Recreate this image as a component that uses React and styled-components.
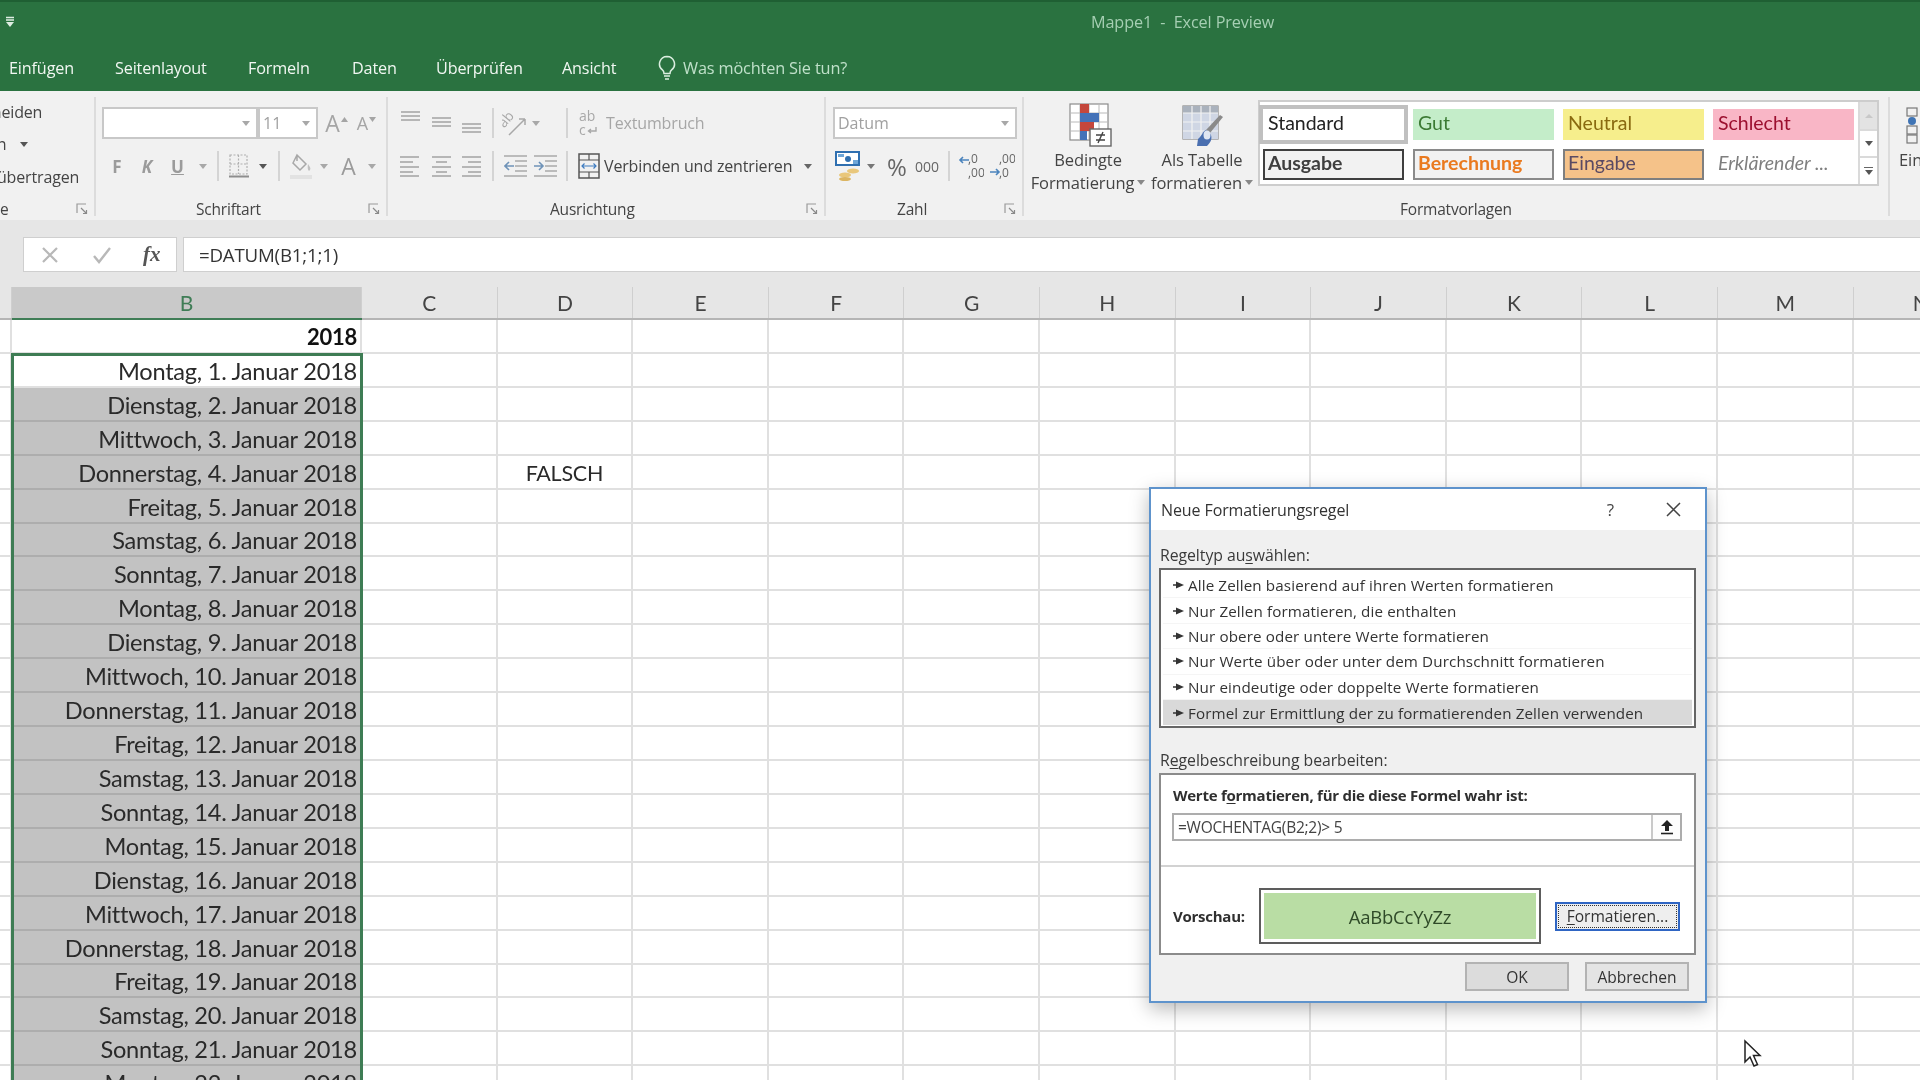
import React from "react";
import styled, { createGlobalStyle } from "styled-components";

const UI = `"Open Sans", "Noto Sans", "Liberation Sans", sans-serif`;
const CELL = `Lato, "Open Sans", sans-serif`;

const Global = createGlobalStyle`
  html, body { margin: 0; padding: 0; background: #fff; }
  body { font-family: ${UI}; }
  * { box-sizing: border-box; }
`;

const Page = styled.div`
  width: 1920px; height: 1080px; overflow: hidden; position: relative; background: #fff;
  filter: blur(0.45px);
`;
const TitleBar = styled.header`
  height: 91px; background: #2a7240; border-top: 2px solid #1f5f33; display: flex; flex-direction: column; color: #fff;
`;
const TitleRow = styled.div`
  height: 42px; display: flex; align-items: center; position: relative; padding: 0 0 2px 6px;
`;
const WindowTitle = styled.div`
  margin-left: 1077px; font-size: 16.2px; color: #a6cfb3; white-space: nowrap; letter-spacing: -0.1px;
`;
const TabRow = styled.nav`
  height: 47px; display: flex; align-items: center; padding: 1px 0 0 9px;
`;
const Tab = styled.span`
  font-size: 16.2px; color: #f1f7f2; width: ${p => p.$w}px; flex: none; letter-spacing: -0.15px;
`;
const Tell = styled.span`
  display: flex; align-items: center; gap: 7px; font-size: 16.3px; color: #bfe0c9; letter-spacing: -0.15px; margin-left: -9px;
`;

const Ribbon = styled.section`
  height: 129px; background: #f1f1f1; display: flex; width: 2100px;
`;
const Group = styled.div`
  width: ${p => p.$w}px; flex: none; height: 119px; margin-top: 6px; border-right: 2px solid #dcdcdc;
  padding-top: 8px; position: relative; display: flex; flex-direction: column;
  padding-left: ${p => p.$pl || 0}px;
`;
const GroupLabel = styled.div`
  position: absolute; left: ${p => p.$x}px; top: 102px; font-size: 15.5px; line-height: 20px; color: #444; white-space: nowrap; letter-spacing: -0.2px;
`;
const Launcher = styled.span`
  position: absolute; right: 6px; top: 101px; width: 12px; height: 12px; display: block;
`;
const ToolRow = styled.div`
  height: 36px; display: flex; align-items: center; flex: none; margin-bottom: 7px;
`;
const Slot = styled.span`
  width: ${p => p.$w}px; height: 30px; flex: none; display: flex; align-items: center; justify-content: center;
  color: ${p => p.$c || "#9b9b9b"}; font-size: ${p => p.$fs || 16}px; font-weight: ${p => p.$b ? 700 : 400};
  font-family: ${UI};
`;
const Divider = styled.span`
  width: ${p => p.$w}px; height: 30px; flex: none; display: flex; justify-content: center;
  &::after { content: ""; width: 1.5px; height: 100%; background: #d4d4d4; }
`;
const Caret = styled.span`
  width: 0; height: 0; border-left: 4px solid transparent; border-right: 4px solid transparent;
  border-top: 5px solid ${p => p.$c || "#a8a8a8"}; display: inline-block; flex: none; margin-left: ${p => p.$ml || 0}px;
`;
const ComboBox = styled.div`
  width: ${p => p.$w}px; height: 32px; background: #fff; border: 2px solid #c8c8c8; display: flex; align-items: center;
  justify-content: space-between; padding: 0 6px 0 3px; flex: none; color: #a0a0a0; font-size: 16px; margin-left: ${p => p.$ml || 0}px;
`;
const ToolText = styled.span`
  font-size: ${p => p.$fs || 16}px; color: ${p => p.$c || "#444"}; white-space: nowrap; letter-spacing: -0.15px; flex: none;
  width: ${p => p.$w ? p.$w + "px" : "auto"}; margin-left: ${p => p.$ml || 0}px;
`;
const ClipWindow = styled.div`
  width: 92px; height: 100px; overflow: hidden; margin-top: -12px; flex: none;
`;
const ClipColumn = styled.div`
  margin-left: -60px; display: flex; flex-direction: column; padding-top: 2px;
`;
const ClipLine = styled.div`
  height: ${p => p.$h}px; display: flex; align-items: center; gap: 14px; font-size: 16px; color: #444; white-space: nowrap; letter-spacing: -0.15px;
`;
const Large = styled.div`
  width: ${p => p.$w}px; flex: none; display: flex; flex-direction: column; align-items: ${p => p.$start ? "flex-start" : "center"}; color: #444; font-size: 16.5px; letter-spacing: -0.1px; line-height: 23px; white-space: nowrap;
`;
const LargeIcon = styled.div`
  height: 46px; display: flex; align-items: flex-start; margin: -2px 0 -1px ${p => p.$ml || 0}px;
`;
const LargeLine = styled.div`
  display: flex; align-items: center; gap: 3px;
`;
const Row = styled.div`display: flex;`;
const Gallery = styled.div`
  width: 621px; height: 86px; margin-left: 3px; margin-top: -5px; background: #fff; border: 2px solid #cdcdcd; display: flex; flex: none;
`;
const StyleGrid = styled.div`
  width: 600px; padding: 7px 0 0 3px; display: grid; grid-template-columns: repeat(4, 141px); column-gap: 9px; grid-template-rows: 31px 31px; row-gap: 9px;
`;
const StyleCell = styled.div`
  font-family: ${CELL}; font-size: 19.5px; display: flex; align-items: center; padding: 0 0 5px ${p => p.$bd ? 3 : 5}px; white-space: nowrap;
  background: ${p => p.$bg || "#fff"}; color: ${p => p.$c || "#222"};
  border: ${p => p.$bd || "none"}; font-weight: ${p => p.$b ? 700 : 400}; font-style: ${p => p.$i ? "italic" : "normal"};
  ${p => p.$active && "box-shadow: 0 0 0 4px #c0c0c0;"}
`;
const GalleryScroll = styled.div`
  width: 19px; margin-left: auto; border-left: 2px solid #dadada; display: grid; grid-template-rows: 29px 27px 1fr; background: #f3f3f3;
`;
const ScrollBtn = styled.div`
  display: flex; flex-direction: column; align-items: center; justify-content: center; gap: 2px; background: ${p => p.$bg || "#fff"}; border-bottom: 2px solid #dadada;
  &:last-child { border-bottom: 0; }
`;
const Dash = styled.span`width: 9px; height: 1.5px; background: #666;`;

const FormulaBand = styled.div`
  height: 67px; background: #e6e6e6; padding-top: 17px;
`;
const FormulaBar = styled.div`
  height: 35px; display: flex; padding-left: 23px; background: #e6e6e6;
`;
const FormulaBtns = styled.div`
  width: 154px; height: 100%; background: #fff; border: 1.5px solid #cfcfcf; display: flex; align-items: center; padding-left: 17px;
`;
const FormulaBtn = styled.span`
  width: 51px; flex: none; display: flex; justify-content: flex-start; color: ${p => p.$c}; font-family: "Liberation Serif", serif; font-style: italic; font-size: 21px; font-weight: 700;
`;
const FormulaInput = styled.div`
  flex: 1; margin-left: 6px; background: #fff; border-top: 1.5px solid #cfcfcf; border-bottom: 1.5px solid #cfcfcf; border-left: 1.5px solid #cfcfcf;
  font-size: 18.7px; color: #333; display: flex; align-items: center; padding-left: 15px; letter-spacing: -0.2px;
`;

const COLS = "12px 350px repeat(12, 135.6px)";
const Sheet = styled.section`position: relative; height: 793px; overflow: hidden;`;
const HeaderRow = styled.div`
  display: grid; grid-template-columns: ${COLS}; height: 33px; background: #e6e6e6; border-bottom: 2px solid #b5b5b5;
`;
const HeaderCell = styled.div`
  font-family: ${CELL}; font-size: 21px; display: flex; align-items: center; justify-content: center; color: ${p => p.$active ? "#3f7d56" : "#444"};
  background: ${p => p.$active ? "#c9c9c9" : "transparent"}; border-right: 1.5px solid #cfcfcf;
  ${p => p.$active && "box-shadow: 0 2px 0 #3f7d56;"}
`;
const SheetRow = styled.div`
  display: grid; grid-template-columns: ${COLS}; height: 33.93px;
`;
const Cell = styled.div`
  font-family: ${CELL}; font-size: ${p => p.$fs || 23.6}px; color: #2a2a2a; border-right: 2px solid #e0e0e0; border-bottom: 2px solid #e0e0e0;
  display: flex; align-items: center; justify-content: ${p => p.$center ? "center" : "flex-end"}; padding: 2px ${p => p.$center ? 0 : 3}px 0 0;
  white-space: nowrap; letter-spacing: -0.25px;
`;
const DateCell = styled(Cell)`
  background: ${p => p.$gray ? "#c2c2c2" : "#fff"}; border-bottom-color: ${p => p.$gray ? "#adadad" : "#e0e0e0"}; font-weight: ${p => p.$b ? 700 : 400};
  ${p => p.$b && "color: #111;"}
`;
const Selection = styled.div`
  position: absolute; left: 11px; top: 66px; width: 352px; height: 760px; border: 3px solid #3e7c54; pointer-events: none;
`;

const Dialog = styled.div`
  position: absolute; left: 1149px; top: 487px; width: 558px; height: 516px; background: #f0f0f0; border: 2px solid #5e93cc;
  box-shadow: 0 6px 18px rgba(0,0,0,.28); display: flex; flex-direction: column; font-family: ${UI}; color: #333; padding: 0 9px 0 8px;
`;
const DialogTitle = styled.div`
  height: 41px; margin: 0 -9px 0 -8px; background: #fff; display: flex; align-items: center; padding: 0 24px 0 10px; font-size: 16px; letter-spacing: -0.1px; color: #333; flex: none;
`;
const DialogActions = styled.div`margin-left: auto; display: flex; align-items: center; gap: 52px;`;
const HelpMark = styled.span`font-size: 17px; color: #444;`;
const FieldLabel = styled.div`
  font-size: 15.8px; height: 22px; line-height: 22px; margin-top: ${p => p.$mt}px; padding-left: 1px; flex: none; letter-spacing: -0.05px; color: #3a3a3a;
  u { text-underline-offset: 2px; }
`;
const RuleList = styled.div`
  height: 160px; margin-top: 2px; border: 2px solid #666; background: #fff; padding: 3px 2px 0; flex: none;
`;
const RuleRow = styled.div`
  height: 25.4px; display: flex; align-items: center; gap: 4px; padding-left: 10px; font-size: 15.2px; color: #333; white-space: nowrap;
  background: ${p => p.$on ? "#d9d9d9" : "#fff"}; border-bottom: ${p => p.$on ? "0" : "1.5px solid #f5f5f5"}; letter-spacing: .12px;
`;
const DescBox = styled.div`
  height: 182px; margin-top: 2px; border: 2px solid #8b8b8b; background: #fff; flex: none; display: flex; flex-direction: column;
`;
const BoldLabel = styled.div`
  font-size: 15px; font-weight: 700; color: #2f2f2f; margin: 10px 0 0 12px; height: 20px; line-height: 20px; letter-spacing: -0.25px;
  u { text-underline-offset: 2px; }
`;
const FormulaField = styled.div`
  margin: 8px 0 0 11px; width: 510px; height: 28px; border: 2px solid #adadad; display: flex; align-items: center; padding-left: 4px; font-size: 15.5px; color: #444; letter-spacing: -0.25px;
`;
const RefBtn = styled.div`
  margin-left: auto; width: 29px; height: 100%; background: #fdfdfd; border-left: 2px solid #c9c9c9; display: flex; align-items: center; justify-content: center;
`;
const HR = styled.div`height: 2px; background: #d2d2d2; margin-top: 24px; flex: none;`;
const PreviewRow = styled.div`
  margin: 21px 0 0 12px; display: flex; align-items: center; height: 56px;
`;
const PreviewLabel = styled.div`font-size: 15px; font-weight: 700; color: #2f2f2f; width: 86px; flex: none; letter-spacing: -0.25px;`;
const PreviewSwatch = styled.div`
  width: 282px; height: 56px; border: 2px solid #5d5d5d; padding: 3px; flex: none; background: #fff;
`;
const PreviewFill = styled.div`
  height: 100%; background: #b9dda4; display: flex; align-items: center; justify-content: center; font-size: 18.5px; color: #2f4a28; letter-spacing: -0.2px;
`;
const ButtonBase = styled.div`
  display: flex; align-items: center; justify-content: center; font-size: 15.6px; color: #333; letter-spacing: -0.05px; flex: none;
  u { text-underline-offset: 2px; }
`;
const PrimaryBtn = styled(ButtonBase)`
  width: 125px; height: 29px; margin-left: 14px; background: #eeeeee; border: 2.5px solid #2f65c3; outline: 1px dotted #333; outline-offset: -4px;
`;
const DialogButtons = styled.div`margin-top: 7px; display: flex; justify-content: flex-end; gap: 16px; padding-right: 7px; flex: none;`;
const PlainBtn = styled(ButtonBase)`
  width: 104px; height: 29px; background: ${p => p.$bg || "#e4e4e4"}; border: 2px solid #b3b3b3;
`;
const CursorMark = styled.div`
  position: absolute; left: 1743px; top: 1039px; width: 20px; height: 30px;
`;

const Svg = ({ w, h, children }) => <svg width={w} height={h} viewBox={`0 0 ${w} ${h}`} fill="none">{children}</svg>;

const Lines = ({ rows, color = "#a8a8a8" }) => (
  <Svg w={22} h={26}>
    {rows.map(([y, x0, x1], i) => <line key={i} x1={x0} x2={x1} y1={y} y2={y} stroke={color} strokeWidth="1.6" />)}
  </Svg>
);
const TOP = [[2, 2, 21], [6, 2, 21], [10, 2, 21]];
const MID = [[8, 2, 21], [12, 2, 21], [16, 2, 21]];
const BOT = [[14, 2, 21], [18, 2, 21], [22, 2, 21]];
const LEFT = [[4, 1, 20], [9, 1, 14], [14, 1, 20], [19, 1, 14], [23, 1, 20]];
const CENTER = [[4, 2, 21], [9, 6, 17], [14, 2, 21], [19, 6, 17], [23, 2, 21]];
const RIGHT = [[4, 2, 21], [9, 8, 21], [14, 2, 21], [19, 8, 21], [23, 2, 21]];

const Launch = () => (
  <Launcher>
    <Svg w={12} h={12}>
      <path d="M1 10V1h9" stroke="#9a9a9a" strokeWidth="1.2" />
      <path d="M5 5l5 5M7 10.5h3.5V7" stroke="#8a8a8a" strokeWidth="1.2" />
    </Svg>
  </Launcher>
);

const Orientation = () => (
  <Svg w={26} h={28}>
    <text x="0" y="15" transform="rotate(-50 6 15)" fontFamily={UI} fontSize="14" fill="#a8a8a8">ab</text>
    <path d="M7 26L23 10M23 10h-6M23 10v6" stroke="#a8a8a8" strokeWidth="1.5" />
  </Svg>
);
const WrapIcon = () => (
  <Svg w={22} h={28}>
    <text x="1" y="12" fontFamily={UI} fontSize="14" fill="#a8a8a8">ab</text>
    <text x="1" y="26" fontFamily={UI} fontSize="14" fill="#a8a8a8">c</text>
    <path d="M18 18v4h-7M13 20l-2.5 2 2.5 2" stroke="#a8a8a8" strokeWidth="1.4" />
  </Svg>
);
const MergeIcon = () => (
  <Svg w={22} h={26}>
    <rect x="1" y="1" width="20" height="24" stroke="#555" strokeWidth="1.5" />
    <path d="M1 7h20M1 19h20M11 1v6M11 19v6" stroke="#555" strokeWidth="1.2" />
    <path d="M4 13h14M6.5 10.5L4 13l2.5 2.5M15.5 10.5L18 13l-2.5 2.5" stroke="#3f7cc0" strokeWidth="1.2" />
  </Svg>
);
const IndentIcon = ({ out }) => (
  <Svg w={24} h={24}>
    {[2, 22].map(y => <line key={y} x1="0" x2="23" y1={y} y2={y} stroke="#a8a8a8" strokeWidth="1.5" />)}
    {[7, 12, 17].map(y => <line key={y} x1="11" x2="23" y1={y} y2={y} stroke="#a8a8a8" strokeWidth="1.5" />)}
    <path d={out ? "M10 12H1M5 8l-4 4 4 4" : "M0 12h9M5 8l4 4-4 4"} stroke="#6f93b8" strokeWidth="1.6" />
  </Svg>
);
const BorderIcon = () => (
  <Svg w={22} h={26}>
    <rect x="2" y="2" width="17" height="19" stroke="#b0b0b0" strokeWidth="1.2" strokeDasharray="2 1.5" />
    <path d="M10.5 2v19M2 11h17" stroke="#b0b0b0" strokeWidth="1.2" strokeDasharray="2 1.5" />
    <path d="M1 23.5h20" stroke="#8d8d8d" strokeWidth="2" />
  </Svg>
);
const FillIcon = () => (
  <Svg w={24} h={28}>
    <path d="M8 3l9 9-6 6-7-7zM8 3V9" stroke="#a8a8a8" strokeWidth="1.5" />
    <path d="M19 12c2 3 3 4 2 6s-3 0-2-6z" fill="#c0c0c0" />
    <rect x="1" y="23" width="22" height="4" fill="#e2e2e2" />
  </Svg>
);
const GrowA = ({ up, size = 22 }) => (
  <Slot $w={30} $fs={size} $c="#a5a5a5">
    A
    <Svg w={9} h={18}>
      <path d={up ? "M1 8l3.5-5L8 8z" : "M1 3l3.5 5L8 3z"} fill="#a5a5a5" />
    </Svg>
  </Slot>
);
const Currency = () => (
  <Svg w={26} h={30}>
    <rect x="1" y="1" width="23" height="13" fill="#fff" stroke="#2f6fb0" strokeWidth="2" />
    <path d="M3 3h6v3H3zM18 9h5v4h-5z" fill="#6ea6d8" />
    <circle cx="13" cy="8" r="3" fill="#2f6fb0" />
    <ellipse cx="18" cy="20" rx="6" ry="2.5" fill="#e9c77b" />
    <ellipse cx="10" cy="24" rx="6" ry="2.5" fill="#e9c77b" />
    <ellipse cx="10" cy="28" rx="6" ry="2" fill="#dcb562" />
  </Svg>
);
const DecIcon = ({ inc }) => (
  <Svg w={26} h={28}>
    <text x="10" y="11" fontFamily={UI} fontSize="12" fill="#666">{inc ? ",0" : ",00"}</text>
    <text x="10" y="25" fontFamily={UI} fontSize="12" fill="#666">{inc ? ",00" : ",0"}</text>
    <path d={inc ? "M11 8H2M5 5L2 8l3 3" : "M1 20h9M7 17l3 3-3 3"} stroke="#4b84bd" strokeWidth="1.6" />
  </Svg>
);
const CondIcon = () => (
  <Svg w={44} h={44}>
    <rect x="1" y="1" width="38" height="36" fill="#fff" stroke="#8b8b8b" strokeWidth="1.2" />
    <path d="M11 1v36M20 1v36M30 1v36M1 10h38M1 19h38M1 28h38" stroke="#b9b9b9" strokeWidth="1" />
    <rect x="11" y="1" width="9" height="9" fill="#c4473c" />
    <rect x="11" y="10" width="19" height="9" fill="#4472b8" />
    <rect x="11" y="19" width="14" height="9" fill="#c4473c" />
    <rect x="11" y="28" width="7" height="9" fill="#4472b8" />
    <rect x="21" y="26" width="21" height="17" fill="#fff" stroke="#666" strokeWidth="1.4" />
    <path d="M27 32h9M27 37h9M34 29l-5 11" stroke="#444" strokeWidth="1.4" />
  </Svg>
);
const TableIcon = () => (
  <Svg w={44} h={44}>
    <rect x="1" y="3" width="35" height="33" fill="#fff" stroke="#8b8b8b" strokeWidth="1.2" />
    <rect x="1" y="3" width="35" height="7" fill="#aab2bd" />
    <rect x="1" y="10" width="35" height="26" fill="#cfd6e4" />
    <path d="M10 3v33M19 3v33M28 3v33M1 10h35M1 19h35M1 28h35" stroke="#f2f2f2" strokeWidth="1.2" />
    <path d="M41 14L28 30l-4-3 14-15z" fill="#8a8a8a" />
    <path d="M24 27c-4 2-4 6-8 9l-1 7h10c4-4 6-8 3-13z" fill="#4a6fb0" />
    <ellipse cx="25" cy="32" rx="3.5" ry="4.5" fill="#dfe6f2" />
  </Svg>
);
const Bulb = () => (
  <Svg w={18} h={26}>
    <path d="M9 1.5a7.5 7.5 0 0 0-4.6 13.4c1 .9 1.6 2 1.6 3.6h6c0-1.6.6-2.7 1.6-3.6A7.5 7.5 0 0 0 9 1.5z" stroke="#dbeee0" strokeWidth="1.5" />
    <path d="M6 21h6M7 24h4" stroke="#dbeee0" strokeWidth="1.5" />
  </Svg>
);
const RuleArrow = () => (
  <Svg w={11} h={10}>
    <path d="M0 5h5" stroke="#333" strokeWidth="1.5" />
    <path d="M3 1.5L11 5 3 8.5z" fill="#333" />
  </Svg>
);

const letters = ["B", "C", "D", "E", "F", "G", "H", "I", "J", "K", "L", "M", "N"];
const weekdays = ["Montag", "Dienstag", "Mittwoch", "Donnerstag", "Freitag", "Samstag", "Sonntag"];
const rows = Array.from({ length: 22 }, (_, i) => `${weekdays[i % 7]}, ${i + 1}. Januar 2018`);
const rules = [
  "Alle Zellen basierend auf ihren Werten formatieren",
  "Nur Zellen formatieren, die enthalten",
  "Nur obere oder untere Werte formatieren",
  "Nur Werte über oder unter dem Durchschnitt formatieren",
  "Nur eindeutige oder doppelte Werte formatieren",
  "Formel zur Ermittlung der zu formatierenden Zellen verwenden",
];
const tabs = [["Einfügen", 106], ["Seitenlayout", 133], ["Formeln", 104], ["Daten", 84], ["Überprüfen", 126], ["Ansicht", 105]];

const EmptyCells = ({ falsch }) => (
  <>
    <Cell />
    <Cell $center $fs={21.5}>{falsch ? "FALSCH" : ""}</Cell>
    {Array.from({ length: 10 }, (_, i) => <Cell key={i} />)}
  </>
);

export default function App() {
  return (
    <Page>
      <Global />
      <TitleBar>
        <TitleRow>
          <Svg w={8} h={12}>
            <path d="M0 1.5h8M0 4h8" stroke="#dfeee3" strokeWidth="1.4" />
            <path d="M0 6l4 5 4-5z" fill="#dfeee3" />
          </Svg>
          <WindowTitle>Mappe1 &nbsp;-&nbsp; Excel Preview</WindowTitle>
        </TitleRow>
        <TabRow>
          {tabs.map(([t, w]) => <Tab key={t} $w={w}>{t}</Tab>)}
          <Tell><Bulb />Was möchten Sie tun?</Tell>
        </TabRow>
      </TitleBar>

      <Ribbon>
        <Group $w={96}>
          <ClipWindow>
            <ClipColumn>
              <ClipLine $h={34}>Ausschneiden</ClipLine>
              <ClipLine $h={30}>Kopieren<Caret $c="#555" /></ClipLine>
              <ClipLine $h={36}>Format übertragen</ClipLine>
            </ClipColumn>
          </ClipWindow>
          <GroupLabel $x={0}>e</GroupLabel>
          <Launch />
        </Group>

        <Group $w={292} $pl={6}>
          <ToolRow>
            <ComboBox $w={156}><span /><Caret /></ComboBox>
            <ComboBox $w={60}>11<Caret /></ComboBox>
            <Slot $w={4} />
            <GrowA up size={23} />
            <GrowA size={18} />
          </ToolRow>
          <ToolRow>
            <Slot $w={30} $b $fs={17}>F</Slot>
            <Slot $w={30} $b $fs={17}><i>K</i></Slot>
            <Slot $w={31} $b $fs={17}><u>U</u></Slot>
            <Slot $w={19}><Caret /></Slot>
            <Divider $w={12} />
            <Slot $w={30}><BorderIcon /></Slot>
            <Slot $w={18}><Caret $c="#555" /></Slot>
            <Divider $w={14} />
            <Slot $w={30}><FillIcon /></Slot>
            <Slot $w={16}><Caret /></Slot>
            <Slot $w={33} $fs={23}>A</Slot>
            <Slot $w={14}><Caret /></Slot>
          </ToolRow>
          <GroupLabel $x={100}>Schriftart</GroupLabel>
          <Launch />
        </Group>

        <Group $w={438} $pl={6}>
          <ToolRow>
            <Slot $w={31}><Lines rows={TOP} /></Slot>
            <Slot $w={31}><Lines rows={MID} /></Slot>
            <Slot $w={30}><Lines rows={BOT} /></Slot>
            <Divider $w={14} />
            <Slot $w={30}><Orientation /></Slot>
            <Slot $w={12}><Caret /></Slot>
            <Slot $w={18} />
            <Divider $w={14} />
            <Slot $w={30}><WrapIcon /></Slot>
            <ToolText $c="#a6a6a6" $ml={2}>Textumbruch</ToolText>
          </ToolRow>
          <ToolRow>
            <Slot $w={31}><Lines rows={LEFT} /></Slot>
            <Slot $w={31}><Lines rows={CENTER} /></Slot>
            <Slot $w={30}><Lines rows={RIGHT} /></Slot>
            <Divider $w={14} />
            <Slot $w={31}><IndentIcon out /></Slot>
            <Slot $w={30}><IndentIcon /></Slot>
            <Divider $w={12} />
            <Slot $w={31}><MergeIcon /></Slot>
            <ToolText $w={186}>Verbinden und zentrieren</ToolText>
            <Caret $c="#666" $ml={14} />
          </ToolRow>
          <GroupLabel $x={162}>Ausrichtung</GroupLabel>
          <Launch />
        </Group>

        <Group $w={198} $pl={7}>
          <ToolRow>
            <ComboBox $w={184}>Datum<Caret /></ComboBox>
          </ToolRow>
          <ToolRow>
            <Slot $w={30}><Currency /></Slot>
            <Slot $w={16}><Caret $c="#777" /></Slot>
            <Slot $w={3} />
            <Slot $w={30} $fs={24} $c="#666">%</Slot>
            <Slot $w={30} $fs={14} $c="#666">000</Slot>
            <Divider $w={14} />
            <Slot $w={30}><DecIcon inc /></Slot>
            <Slot $w={31}><DecIcon /></Slot>
          </ToolRow>
          <GroupLabel $x={71}>Zahl</GroupLabel>
          <Launch />
        </Group>

        <Group $w={866} $pl={3}>
          <Row>
            <Large $w={122}>
              <LargeIcon $ml={5}><CondIcon /></LargeIcon>
              <LargeLine>Bedingte</LargeLine>
              <LargeLine>Formatierung<Caret $c="#888" /></LargeLine>
            </Large>
            <Large $w={106}>
              <LargeIcon $ml={4}><TableIcon /></LargeIcon>
              <LargeLine>Als Tabelle</LargeLine>
              <LargeLine>formatieren<Caret $c="#888" /></LargeLine>
            </Large>
            <Gallery>
              <StyleGrid>
                <StyleCell $active>Standard</StyleCell>
                <StyleCell $bg="#c4edc9" $c="#3b7a33">Gut</StyleCell>
                <StyleCell $bg="#f6ee8c" $c="#8a6a10">Neutral</StyleCell>
                <StyleCell $bg="#f9b6c6" $c="#9c0f2f">Schlecht</StyleCell>
                <StyleCell $bg="#f2f2f2" $c="#3f3f3f" $b $bd="2px solid #3f3f3f">Ausgabe</StyleCell>
                <StyleCell $bg="#f2f2f2" $c="#ea7a1f" $b $bd="2px solid #8a8a8a">Berechnung</StyleCell>
                <StyleCell $bg="#f5c289" $c="#5a4a63" $bd="2px solid #7f7f7f">Eingabe</StyleCell>
                <StyleCell $c="#7f7f7f" $i>Erklärender ...</StyleCell>
              </StyleGrid>
              <GalleryScroll>
                <ScrollBtn $bg="#e3e3e3"><Svg w={10} h={6}><path d="M1 5l4-4 4 4z" fill="#c8c8c8" /></Svg></ScrollBtn>
                <ScrollBtn><Caret $c="#555" /></ScrollBtn>
                <ScrollBtn><Dash /><Caret $c="#555" /></ScrollBtn>
              </GalleryScroll>
            </Gallery>
          </Row>
          <GroupLabel $x={376}>Formatvorlagen</GroupLabel>
        </Group>

        <Group $w={200} $pl={9}>
          <Row>
            <Large $w={40} $start>
              <LargeIcon>
                <Svg w={30} h={44}>
                  <rect x="8" y="5" width="10" height="8" stroke="#777" strokeWidth="1.2" />
                  <circle cx="13" cy="18" r="4" fill="#3f74b5" />
                  <rect x="8" y="23" width="10" height="8" stroke="#777" strokeWidth="1.2" />
                  <rect x="8" y="32" width="10" height="8" stroke="#777" strokeWidth="1.2" />
                </Svg>
              </LargeIcon>
              <LargeLine>Einfügen</LargeLine>
            </Large>
          </Row>
        </Group>
      </Ribbon>

      <FormulaBand>
        <FormulaBar>
          <FormulaBtns>
            <FormulaBtn $c="#b5b5b5">
              <Svg w={18} h={18}><path d="M2 2l14 14M16 2L2 16" stroke="#b8b8b8" strokeWidth="2.2" /></Svg>
            </FormulaBtn>
            <FormulaBtn $c="#b5b5b5">
              <Svg w={20} h={18}><path d="M2 10l5 6L18 2" stroke="#b8b8b8" strokeWidth="2.4" /></Svg>
            </FormulaBtn>
            <FormulaBtn $c="#555">fx</FormulaBtn>
          </FormulaBtns>
          <FormulaInput>=DATUM(B1;1;1)</FormulaInput>
        </FormulaBar>
      </FormulaBand>

      <Sheet>
        <HeaderRow>
          <HeaderCell />
          {letters.map((l, i) => <HeaderCell key={l} $active={i === 0}>{l}</HeaderCell>)}
        </HeaderRow>
        <SheetRow>
          <Cell />
          <DateCell $b $fs={22}>2018</DateCell>
          <EmptyCells />
        </SheetRow>
        {rows.map((r, i) => (
          <SheetRow key={r}>
            <Cell />
            <DateCell $gray={i > 0}>{r}</DateCell>
            <EmptyCells falsch={i === 3} />
          </SheetRow>
        ))}
        <Selection />
      </Sheet>

      <Dialog>
        <DialogTitle>
          Neue Formatierungsregel
          <DialogActions>
            <HelpMark>?</HelpMark>
            <Svg w={15} h={15}><path d="M1 1l13 13M14 1L1 14" stroke="#444" strokeWidth="1.5" /></Svg>
          </DialogActions>
        </DialogTitle>
        <FieldLabel $mt={14}>Regeltyp au<u>s</u>wählen:</FieldLabel>
        <RuleList>
          {rules.map((r, i) => (
            <RuleRow key={r} $on={i === 5}><RuleArrow />{r}</RuleRow>
          ))}
        </RuleList>
        <FieldLabel $mt={21}>R<u>e</u>gelbeschreibung bearbeiten:</FieldLabel>
        <DescBox>
          <BoldLabel>Werte f<u>o</u>rmatieren, für die diese Formel wahr ist:</BoldLabel>
          <FormulaField>
            =WOCHENTAG(B2;2)&gt; 5
            <RefBtn>
              <Svg w={14} h={16}>
                <path d="M7 1L1 7h4v5h4V7h4z" fill="#222" />
                <path d="M1 14.5h12" stroke="#222" strokeWidth="1.6" />
              </Svg>
            </RefBtn>
          </FormulaField>
          <HR />
          <PreviewRow>
            <PreviewLabel>Vorschau:</PreviewLabel>
            <PreviewSwatch><PreviewFill>AaBbCcYyZz</PreviewFill></PreviewSwatch>
            <PrimaryBtn><span><u>F</u>ormatieren...</span></PrimaryBtn>
          </PreviewRow>
        </DescBox>
        <DialogButtons>
          <PlainBtn $bg="#dcdcdc">OK</PlainBtn>
          <PlainBtn>Abbrechen</PlainBtn>
        </DialogButtons>
      </Dialog>

      <CursorMark>
        <Svg w={20} h={30}>
          <path d="M2 2v21l5-5 4 9 3.5-1.5-4-9H17z" fill="#fff" stroke="#222" strokeWidth="1.5" />
        </Svg>
      </CursorMark>
    </Page>
  );
}
